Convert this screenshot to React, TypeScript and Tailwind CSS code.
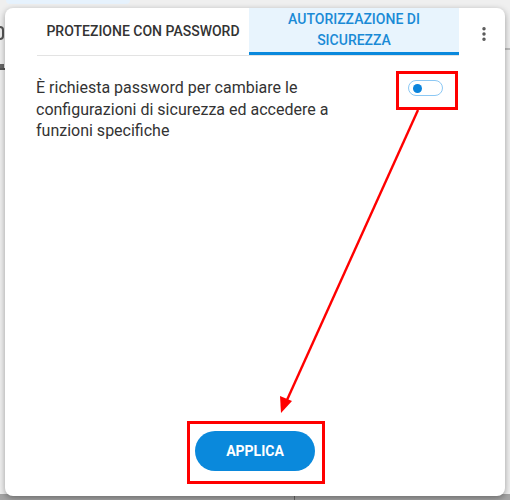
import { EllipsisVertical } from 'lucide-react';

const font = { fontFamily: 'Roboto, "Noto Sans", sans-serif' };

function Backdrop() {
  return (
    <div className="absolute inset-0 bg-[#efefef]">
      <div className="ml-[6px] h-[4px] w-[124px] rounded-b-full bg-[#e6f2fd]" />
      <div className="mt-[22px] h-[14px] w-[4px] rounded-r-sm border-2 border-l-0 border-[#555]" />
      <div className="mt-[24px] h-[4px] w-[4px] bg-[#666]" />
      <div className="h-[2px] w-[5px] bg-[#555]" />
      <div className="absolute right-0 top-[48px] h-[2px] w-[6px] bg-[#bdbdbd]" />
      <div className="absolute bottom-0 left-0 flex h-[6px] w-full bg-[#a5a5a5]">
        <div className="ml-[294px] h-full w-px bg-[#666]" />
      </div>
    </div>
  );
}

function Tabs() {
  return (
    <div className="flex items-start">
      <div className="ml-[32px] flex w-[422px] border-b border-[#e3e3e3]">
        <button className="flex h-[47px] w-[212px] items-center justify-center pb-[1px] text-[14px] font-medium text-[#333]" type="button">
          PROTEZIONE CON PASSWORD
        </button>
        <button
          className="flex h-[47px] w-[210px] flex-col items-center justify-center border-b-[3px] border-[#0a89dd] bg-[#e8f4fd] text-[14px] font-medium leading-[21px] text-[#1a8ad6]"
          type="button"
        >
          <span>AUTORIZZAZIONE DI</span>
          <span>SICUREZZA</span>
        </button>
      </div>
      <button className="ml-[16px] mt-[17px] text-[#555]" type="button">
        <EllipsisVertical size={18} strokeWidth={2.6} />
      </button>
    </div>
  );
}

function Toggle() {
  return (
    <div className="flex h-[16px] w-[35px] items-center rounded-full border border-[#8cc8f4] bg-white px-[4px]">
      <div className="h-[9px] w-[9px] rounded-full bg-[#0a84dc]" />
    </div>
  );
}

// Red callouts drawn over the dialog
function Annotations() {
  return (
    <div className="pointer-events-none absolute inset-0">
      <div className="absolute left-[396px] top-[71px] h-[39px] w-[62px] border-[3px] border-[#ff0000]" />
      <div className="absolute left-[187px] top-[421px] h-[63px] w-[138px] border-[3px] border-[#ff0000]" />
      <svg className="absolute inset-0" width="510" height="500" viewBox="0 0 510 500">
        <line x1="418" y1="110" x2="287" y2="400" stroke="#ff0000" strokeWidth="2.4" />
        <polygon points="281,413 280,396 292,401" fill="#ff0000" />
      </svg>
    </div>
  );
}

export default function App() {
  return (
    <div className="relative h-[500px] w-[510px] overflow-hidden" style={font}>
      <Backdrop />
      <div className="absolute left-[5px] top-[8px] flex h-[488px] w-[500px] flex-col rounded-[8px] bg-white shadow-[0_2px_6px_rgba(0,0,0,0.35)]">
        <Tabs />
        <div className="flex justify-between pl-[31px] pr-[62px] pt-[21px]">
          <p className="w-[310px] text-[16px] leading-[21.6px] text-[#333]">
            È richiesta password per cambiare le configurazioni di sicurezza ed accedere a funzioni specifiche
          </p>
          <div className="pt-[3px]">
            <Toggle />
          </div>
        </div>
        <div className="mt-auto flex justify-center pb-[25px]">
          <button className="h-[40px] w-[120px] rounded-full bg-[#0a89dc] text-[14px] font-bold text-white" type="button">
            APPLICA
          </button>
        </div>
      </div>
      <Annotations />
    </div>
  );
}
